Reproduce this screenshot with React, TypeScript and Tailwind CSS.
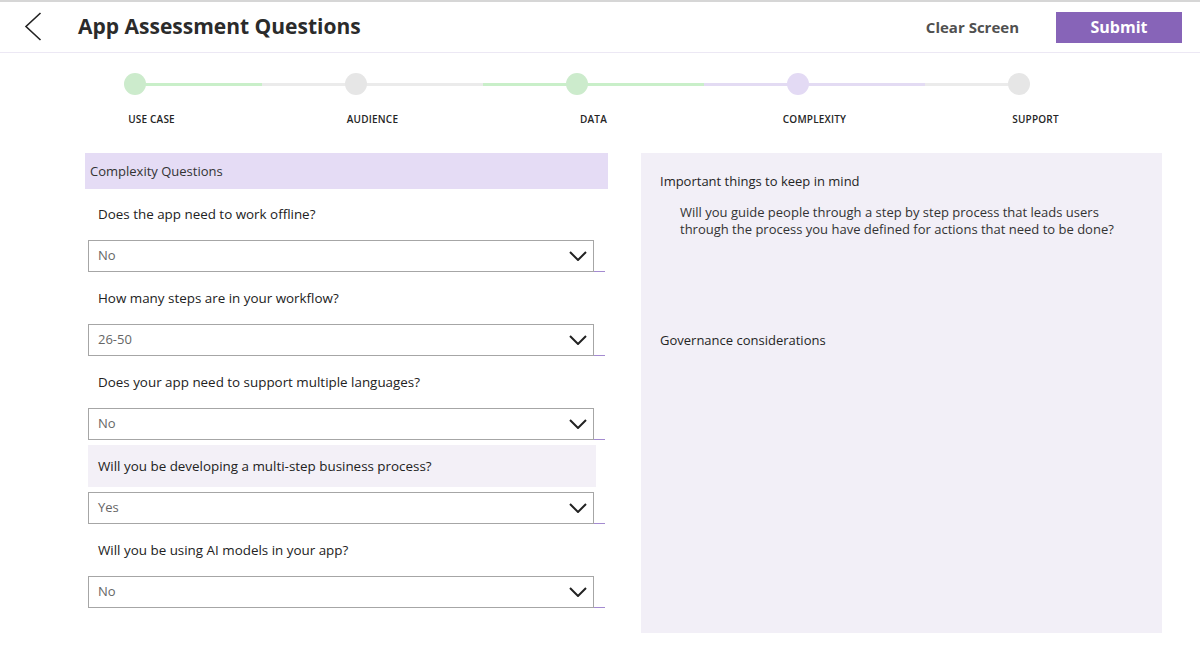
import React from 'react';

type Step = { label: string; dot: string; line: string };

const steps: Step[] = [
  { label: 'USE CASE', dot: 'bg-[#ccebcc]', line: 'bg-[#c9efc9]' },
  { label: 'AUDIENCE', dot: 'bg-[#e6e6e6]', line: 'bg-[#ebebeb]' },
  { label: 'DATA', dot: 'bg-[#ccebcc]', line: 'bg-[#c9efc9]' },
  { label: 'COMPLEXITY', dot: 'bg-[#e3daf4]', line: 'bg-[#e3dbf3]' },
  { label: 'SUPPORT', dot: 'bg-[#e6e6e6]', line: 'bg-[#ebebeb]' },
];

const questions = [
  { q: 'Does the app need to work offline?', a: 'No' },
  { q: 'How many steps are in your workflow?', a: '26-50' },
  { q: 'Does your app need to support multiple languages?', a: 'No' },
  { q: 'Will you be developing a multi-step business process?', a: 'Yes', active: true },
  { q: 'Will you be using AI models in your app?', a: 'No' },
];

function Stepper() {
  return (
    <div className="flex pl-[41px] pt-[20px]">
      {steps.map((s, i) => (
        <div key={s.label} className="w-[221px] flex flex-col">
          <div className="relative h-[22px]">
            {/* line segment */}
            <div
              className={`absolute top-[10px] h-[3px] ${s.line} ${i === 0 ? 'left-[94px] right-0' : i === steps.length - 1 ? 'left-0 w-[94px]' : 'left-0 right-0'}`}
            />
            <div className={`absolute left-[83px] top-0 h-[22px] w-[22px] rounded-full ${s.dot}`} />
          </div>
          <div className="mt-[17px] text-center text-[10px] font-semibold text-[#252525] tracking-[0.2px]">{s.label}</div>
        </div>
      ))}
    </div>
  );
}

function Dropdown({ value }: { value: string }) {
  return (
    <div className="flex items-end">
      <div className="w-[506px] h-[32px] border border-[#a6a6a6] bg-white flex items-center justify-between pl-[9px] pr-[6px]">
        <span className="text-[13px] text-[#666]">{value}</span>
        <svg width="18" height="10" viewBox="0 0 18 10" fill="none">
          <path d="M1 1 L9 9 L17 1" stroke="#222" strokeWidth="2" />
        </svg>
      </div>
      <div className="w-[11px] h-px bg-[#a48bd0]" />
    </div>
  );
}

export default function App() {
  return (
    <div className="w-[1200px] h-[647px] bg-white overflow-hidden font-['Open_Sans',sans-serif] text-[#252525]">
      <div className="h-[2px] bg-[#d6d6d6]" />
      {/* Header */}
      <header className="h-[51px] border-b border-[#ece8f4] flex items-center justify-between">
        <div className="flex items-center">
          <button className="ml-[24px] h-[32px] w-[20px] flex items-center" aria-label="Back">
            <svg width="18" height="30" viewBox="0 0 18 30" fill="none">
              <path d="M16.5 1 L2 14.5 L16.5 28" stroke="#222" strokeWidth="1.6" />
            </svg>
          </button>
          <h1 className="ml-[34px] text-[21px] font-bold text-[#2b2b2b]">App Assessment Questions</h1>
        </div>
        <div className="flex items-center">
          <button className="text-[15px] font-bold text-[#505050] mr-[37px]">Clear Screen</button>
          <button className="mr-[18px] w-[126px] h-[31px] bg-[#8764b8] text-white text-[16px] font-bold">Submit</button>
        </div>
      </header>

      <Stepper />

      <div className="flex pl-[85px] pt-[26px] gap-[33px]">
        {/* Left */}
        <section className="w-[523px]">
          <div className="h-[36px] bg-[#e5dcf5] flex items-center pl-[5px] pt-[2px] text-[13px] text-[#333]">Complexity Questions</div>
          {questions.map((item, i) => (
            <div key={i} className="ml-[3px]">
              <div className={`flex items-center ${i === 0 ? 'h-[51px]' : 'h-[52px]'}`}>
                <div className={`w-[508px] h-[42px] flex items-center px-[10px] text-[13.4px] font-medium text-[#222] ${item.active ? 'bg-[#f3f0f7]' : ''}`}>
                  {item.q}
                </div>
              </div>
              <Dropdown value={item.a} />
            </div>
          ))}
        </section>

        {/* Right */}
        <aside className="w-[521px] h-[480px] bg-[#f2eff7] pl-[19px] pt-[19px] text-[13px] text-[#252525]">
          <h2 className="font-medium">Important things to keep in mind</h2>
          <p className="mt-[12px] ml-[20px] leading-[17px] text-[#333]">
            Will you guide people through a step by step process that leads users
            <br />
            through the process you have defined for actions that need to be done?
          </p>
          <h2 className="mt-[93px] font-medium">Governance considerations</h2>
        </aside>
      </div>
    </div>
  );
}
